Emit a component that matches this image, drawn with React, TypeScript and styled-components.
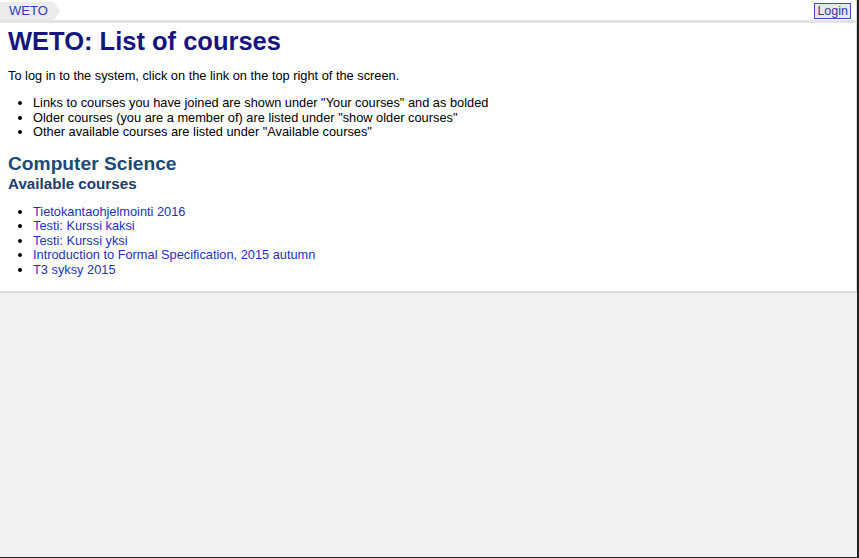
import React from "react";
import styled, { createGlobalStyle } from "styled-components";

const Global = createGlobalStyle`
  html, body { margin: 0; padding: 0; height: 100%; }
  body {
    background: #f2f2f2;
    font-family: "Liberation Sans", Arial, sans-serif;
    font-size: 12.8px;
    color: #000;
  }
  #root { height: 100%; }
`;

const Frame = styled.div`
  height: 558px;
  box-sizing: border-box;
  border-right: 2px solid #222;
  border-bottom: 1px solid #222;
  background: #f2f2f2;
  display: flex;
  flex-direction: column;
`;

const TopBar = styled.div`
  display: flex;
  align-items: center;
  justify-content: space-between;
  height: 20px;
  background: #fff;
  border-bottom: 3px solid #e4e4e4;
  border-right: 1px solid #d8d8d8;
`;

const Crumb = styled.a`
  position: relative;
  display: flex;
  align-items: center;
  height: 18px;
  padding: 0 6px 0 9px;
  margin-top: 1px;
  background: #ececec;
  color: #2a3fc0;
  font-size: 13px;
  text-decoration: none;
  &::after {
    content: "";
    position: absolute;
    right: -6px;
    top: 0;
    border-top: 9px solid transparent;
    border-bottom: 9px solid transparent;
    border-left: 6px solid #ececec;
  }
`;

const LoginButton = styled.button`
  margin-right: 5px;
  margin-top: 2px;
  height: 16px;
  padding: 0 2px;
  background: #e8e8e8;
  border: 1px solid #3a4fd0;
  color: #2a3fa0;
  font-family: "Liberation Sans", Arial, sans-serif;
  font-size: 12.5px;
  line-height: 13px;
  cursor: pointer;
`;

const Main = styled.main`
  background: #fff;
  padding: 2px 8px 14px 8px;
  border-bottom: 2px solid #dcdcdc;
  border-right: 1px solid #d8d8d8;
`;

const Title = styled.h1`
  margin: 0 0 11px 0;
  font-size: 25.5px;
  line-height: 32px;
  font-weight: bold;
  color: #151580;
`;

const Para = styled.p`
  margin: 0 0 12px 0;
  line-height: 16px;
`;

const List = styled.ul`
  margin: 0;
  padding-left: 25px;
  line-height: 14.5px;
`;

const SectionTitle = styled.h2`
  margin: 13px 0 0 0;
  font-size: 19.2px;
  line-height: 22px;
  color: #1c4a78;
`;

const SubTitle = styled.h3`
  margin: 0 0 12px 0;
  font-size: 15.2px;
  line-height: 18px;
  color: #1c3a6a;
`;

const CourseLink = styled.a`
  color: #2233bb;
  text-decoration: none;
`;

const courses = [
  "Tietokantaohjelmointi 2016",
  "Testi: Kurssi kaksi",
  "Testi: Kurssi yksi",
  "Introduction to Formal Specification, 2015 autumn",
  "T3 syksy 2015",
];

export default function App() {
  return (
    <>
      <Global />
      <Frame>
        <TopBar>
          <Crumb href="#">WETO</Crumb>
          <LoginButton>Login</LoginButton>
        </TopBar>
        <Main>
          <Title>WETO: List of courses</Title>
          <Para>To log in to the system, click on the link on the top right of the screen.</Para>
          <List>
            <li>Links to courses you have joined are shown under "Your courses" and as bolded</li>
            <li>Older courses (you are a member of) are listed under "show older courses"</li>
            <li>Other available courses are listed under "Available courses"</li>
          </List>
          <SectionTitle>Computer Science</SectionTitle>
          <SubTitle>Available courses</SubTitle>
          <List>
            {courses.map((c) => (
              <li key={c}>
                <CourseLink href="#">{c}</CourseLink>
              </li>
            ))}
          </List>
        </Main>
      </Frame>
    </>
  );
}
